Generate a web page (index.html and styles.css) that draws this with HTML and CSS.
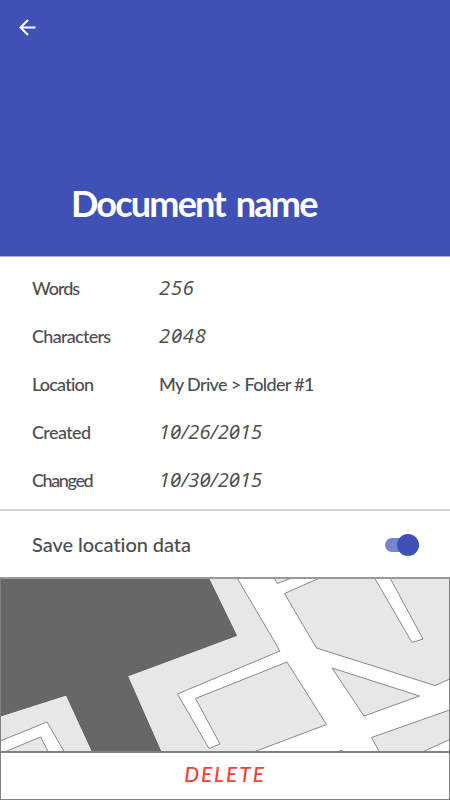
FILE: index.html
```html
<!DOCTYPE html>
<html lang="en">
<head>
<meta charset="utf-8">
<title>Document name</title>
<link rel="stylesheet" href="styles.css">
</head>
<body>
<main class="screen">
  <header class="header">
    <svg class="back" viewBox="0 0 18 18" role="img" aria-label="Back"><path d="M16.500 9.500H1.800M9 2L1.500 9.500L9 17"/></svg>
    <h1 class="title">Document name</h1>
  </header>
  <dl class="details">
    <dt class="words">Words</dt><dd class="count">256</dd>
    <dt class="characters">Characters</dt><dd class="count">2048</dd>
    <dt class="location">Location</dt><dd class="path">My Drive &gt; Folder #1</dd>
    <dt class="created">Created</dt><dd class="date">10/26/2015</dd>
    <dt class="changed">Changed</dt><dd class="date">10/30/2015</dd>
  </dl>
  <section class="setting">
    <span class="setting-label">Save location data</span>
    <span class="switch" role="switch" aria-checked="true" aria-label="Save location data"><span class="thumb"></span></span>
  </section>
  <svg class="map" viewBox="1 579 448 172" aria-hidden="true">
    <g class="block">
      <path d="M-1 577H236.500L280 651L177.500 694L209 748.500L220 744L195.500 698.500L287 662L326.500 724.500L251 753H-1Z"/>
      <path d="M273.500 577L277.500 583.500L294 577Z"/>
      <path d="M322 577L284.500 593.500L316.500 648L435 685.500L451 678.500V577Z"/>
      <path d="M332 668L419.500 696L364 716Z"/>
      <path d="M451 709.500L371.500 737.500L380 753H420L451 739Z"/>
      <path d="M334 753L342 750.300L344 753Z"/>
    </g>
    <g class="road">
      <path d="M374 577L412 642.500L423 639L389.500 577Z"/>
      <path d="M-1 741.500L47 722L65 753H49L40.500 737L2 753H-1Z"/>
    </g>
    <path class="area" d="M-1 577H208L236.500 635.500L127.500 676L161.500 753H93L66.300 695L-1 716.500Z"/>
  </svg>
  <button class="delete"><span>DELETE</span></button>
</main>
</body>
</html>
```
FILE: styles.css
```css
* { box-sizing: border-box; }
body {
  margin: 0;
  background: #fff;
  color: #4d4d4d;
  font-family: Lato, "Liberation Sans", sans-serif;
  font-weight: 500;
}
.screen { width: 450px; height: 800px; overflow: hidden; }
.header {
  display: flex;
  flex-direction: column;
  justify-content: space-between;
  height: 257px;
  padding: 18px 20px 30px 19px;
  background: #3f51b5;
  border-bottom: 1px solid #a3acda;
}
.back { width: 18px; height: 18px; fill: none; stroke: #fff; stroke-width: 2; }
.title {
  margin: 0 0 0 52px;
  color: #fff;
  font-size: 36px;
  line-height: 46px;
  font-weight: 700;
  letter-spacing: -1.8px;
  word-spacing: 4px;
  white-space: nowrap;
}
.details {
  display: grid;
  grid-template-columns: 127px 1fr;
  grid-auto-rows: 48px;
  align-items: center;
  height: 252px;
  margin: 0;
  padding: 7px 32px 5px;
  font-size: 18px;
  white-space: nowrap;
}
.details dd { margin: 0; }
.words { letter-spacing: -1px; }
.characters { letter-spacing: -0.7px; }
.location { letter-spacing: -0.8px; }
.created { letter-spacing: -0.6px; }
.changed { letter-spacing: -1.4px; }
.details .path { letter-spacing: -0.65px; }
.details .count, .details .date {
  padding-bottom: 2px;
  font-family: "Open Sans", Lato, sans-serif;
  font-feature-settings: "zero";
  font-style: italic;
  font-size: 20px;
  font-weight: 500;
}
.count { letter-spacing: 0.9px; }
.date { letter-spacing: 0.1px; }
.setting {
  display: flex;
  align-items: center;
  justify-content: space-between;
  height: 68px;
  padding: 0 31px 0 32px;
  border-top: 2px solid #d3d3d3;
}
.setting-label { font-size: 20px; letter-spacing: -0.05px; }
.switch {
  display: flex;
  align-items: center;
  justify-content: flex-end;
  width: 34px;
  height: 14px;
  margin-top: 2px;
  background: #7986cb;
  border-radius: 7px;
}
.thumb { flex: none; width: 22px; height: 22px; border-radius: 50%; background: #3f51b5; }
.map {
  display: block;
  width: 450px;
  height: 176px;
  border: solid #808080;
  border-width: 2px 1px;
  border-top-color: #999;
}
.block { fill: #e7e7e7; stroke: #898989; }
.road { fill: #fff; stroke: #898989; }
.area { fill: #676767; stroke: #5e5e5e; }
.delete {
  display: flex;
  align-items: center;
  justify-content: center;
  width: 450px;
  height: 47px;
  padding: 0 0 5px;
  border: solid #808080;
  border-width: 0 1px 1px;
  background: #fff;
  color: #f44336;
  font: italic 500 21px Lato, sans-serif;
  letter-spacing: 1.9px;
}
```
